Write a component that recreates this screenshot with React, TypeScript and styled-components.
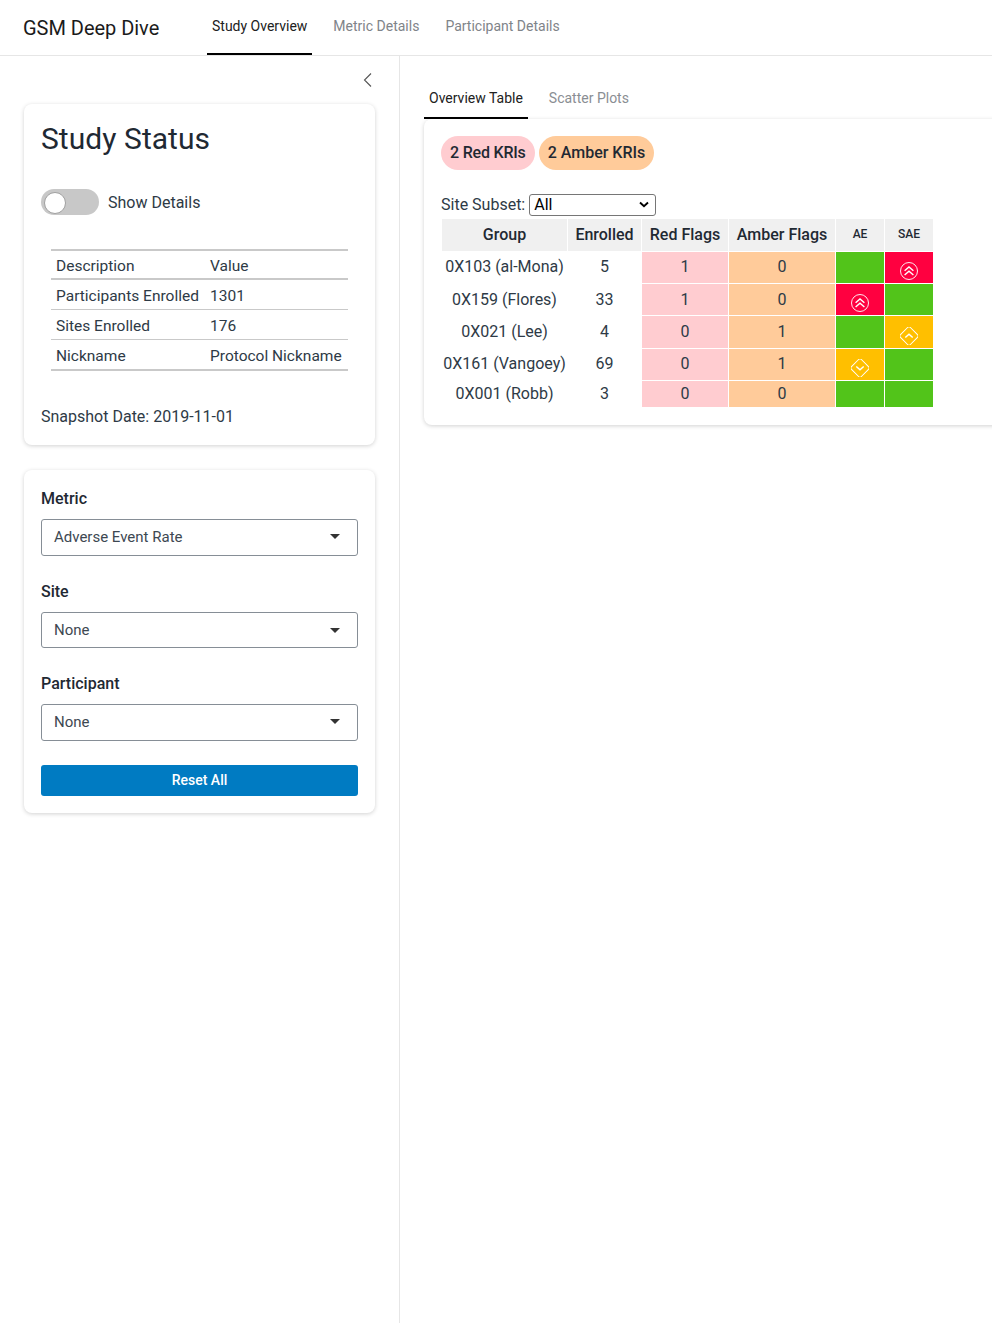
import React from "react";
import styled, {createGlobalStyle} from "styled-components";

const GlobalStyle = createGlobalStyle`
    html, body {
        margin: 0;
        padding: 0;
        background: #ffffff;
    }
    body {
        font-family: Roboto, "Liberation Sans", sans-serif;
        color: #212b36;
    }
`;

const Page = styled.div`
    width: 992px;
    height: 1323px;
    display: flex;
    flex-direction: column;
    overflow: hidden;
`;

const Header = styled.header`
    height: 55px;
    flex: none;
    display: flex;
    border-bottom: 1px solid #e6e6e6;
`;

const Brand = styled.div`
    width: 207px;
    padding: 16px 0 0 23px;
    box-sizing: border-box;
    font-size: 20px;
    line-height: 24px;
    letter-spacing: -0.03px;
    color: #1b1b1b;
`;

const NavTabs = styled.nav`
    display: flex;
`;

const NavTab = styled.div<{$active?: boolean}>`
    height: 55px;
    box-sizing: border-box;
    padding: 18px 5px 0;
    margin-right: 16px;
    font-size: 14px;
    line-height: 17px;
    color: ${(props) => (props.$active ? "#212121" : "#7f8489")};
    border-bottom: 2px solid ${(props) => (props.$active ? "#000000" : "transparent")};
`;

const Body = styled.div`
    flex: 1;
    display: flex;
`;

const Sidebar = styled.aside`
    width: 400px;
    flex: none;
    box-sizing: border-box;
    border-right: 1px solid #e6e6e6;
    padding: 0 23px 0 24px;
`;

const CollapseRow = styled.div`
    height: 48px;
    display: flex;
    justify-content: flex-end;
    align-items: flex-start;
    padding-top: 16px;
    box-sizing: border-box;
    svg {
        margin-right: 3px;
    }
`;

const Card = styled.section`
    width: 351px;
    box-sizing: border-box;
    background: #ffffff;
    border-radius: 8px;
    box-shadow: 0 1px 4px rgba(0, 0, 0, 0.18);
    padding: 0 17px;
`;

const StatusCard = styled(Card)`
    height: 341px;
    margin-bottom: 25px;
`;

const ControlsCard = styled(Card)`
    height: 343px;
`;

const Title = styled.h1`
    margin: 0;
    padding-top: 17px;
    font-size: 30px;
    line-height: 36px;
    font-weight: 400;
    letter-spacing: 0.05px;
    color: #1f2933;
`;

const SwitchRow = styled.div`
    display: flex;
    align-items: center;
    margin-top: 32px;
    font-size: 16px;
    color: #2e3a46;
`;

const SwitchTrack = styled.div`
    width: 58px;
    height: 26px;
    border-radius: 13px;
    background: #c8c8c8;
    margin-right: 9px;
    position: relative;
`;

const SwitchKnob = styled.div`
    position: absolute;
    top: 3px;
    left: 3px;
    width: 20px;
    height: 20px;
    border-radius: 50%;
    background: #ffffff;
    border: 1px solid #a0a0a0;
`;

const InfoTable = styled.table`
    border-collapse: collapse;
    margin: 34px 0 0 10px;
    width: 297px;
    font-size: 15.5px;
    color: #2e3a46;
    border-top: 2px solid #c9c9c9;
    border-bottom: 2px solid #c9c9c9;
    td {
        padding: 4px 5px 0;
        height: 30px;
        box-sizing: border-box;
        border-bottom: 1px solid #c9c9c9;
        white-space: nowrap;
    }
    td:first-child {
        width: 154px;
    }
    tr:first-child td {
        height: 29px;
        padding-top: 2px;
        border-bottom-width: 2px;
    }
    tr:last-child td {
        height: 31px;
        border-bottom: 0;
    }
`;

const Snapshot = styled.div`
    margin-top: 36px;
    font-size: 16px;
    line-height: 20px;
    color: #2e3a46;
`;

const FieldLabel = styled.div`
    font-size: 16px;
    line-height: 19px;
    font-weight: 500;
    color: #1f2933;
    margin-bottom: 11px;
`;

const Field = styled.div<{$gap: number}>`
    padding-top: ${(props) => props.$gap}px;
`;

const SelectBox = styled.div<{$height: number; $lift: number}>`
    height: ${(props) => props.$height}px;
    box-sizing: border-box;
    border: 1px solid #868e96;
    border-radius: 3px;
    display: flex;
    align-items: center;
    justify-content: space-between;
    padding: 0 17px ${(props) => props.$lift}px 12px;
    font-size: 15px;
    color: #3d4852;
`;

const Caret = styled.span`
    width: 0;
    height: 0;
    border-left: 5.5px solid transparent;
    border-right: 5.5px solid transparent;
    border-top: 5px solid #333333;
`;

const ResetButton = styled.button`
    display: block;
    width: 100%;
    height: 31px;
    margin-top: 24px;
    padding: 0 0 1px;
    border: 0;
    border-radius: 3px;
    background: #007bc2;
    color: #ffffff;
    font-family: inherit;
    font-size: 14px;
    font-weight: 500;
`;

const Main = styled.main`
    flex: 1;
    min-width: 0;
    padding: 24px 0 0 24px;
`;

const SubTabs = styled.div`
    display: flex;
    height: 39px;
    box-sizing: border-box;
`;

const SubTab = styled.div<{$active?: boolean}>`
    height: 39px;
    box-sizing: border-box;
    padding: 10px 5px 0;
    margin-right: 16px;
    font-size: 14px;
    line-height: 17px;
    color: ${(props) => (props.$active ? "#212121" : "#8a8e93")};
    border-bottom: 2px solid ${(props) => (props.$active ? "#000000" : "transparent")};
`;

const ResultCard = styled.section`
    width: 600px;
    height: 306px;
    box-sizing: border-box;
    border-radius: 8px 0 0 8px;
    box-shadow: 0 1px 4px rgba(0, 0, 0, 0.18);
    padding: 17px 0 0 17px;
`;

const Badges = styled.div`
    display: flex;
    gap: 4px;
`;

const Badge = styled.div<{$color: string; $tracking?: number}>`
    height: 34px;
    padding: 0 9px;
    border-radius: 17px;
    background: ${(props) => props.$color};
    font-size: 16px;
    font-weight: 500;
    line-height: 34px;
    letter-spacing: ${(props) => props.$tracking || 0}px;
    color: #1f2933;
`;

const SubsetRow = styled.div`
    margin-top: 23px;
    height: 25px;
    padding-bottom: 2px;
    box-sizing: border-box;
    display: flex;
    align-items: center;
    font-size: 16px;
    color: #2e3a46;
`;

const SubsetSelect = styled.select`
    appearance: none;
    margin-left: 4px;
    width: 127px;
    height: 22px;
    padding: 0 0 0 4px;
    font-family: inherit;
    font-size: 16px;
    color: #000000;
    background: #ffffff
        url("data:image/svg+xml,%3Csvg xmlns='http://www.w3.org/2000/svg' width='10' height='7' viewBox='0 0 10 7'%3E%3Cpath d='M1 1.5 5 5.2 9 1.5' fill='none' stroke='%23000' stroke-width='1.9'/%3E%3C/svg%3E")
        no-repeat right 6px center;
    border: 1px solid #767676;
    border-radius: 3px;
`;

const FlagTable = styled.table`
    border-collapse: separate;
    border-spacing: 1px;
    table-layout: fixed;
    width: 493px;
    font-size: 16px;
    color: #2e3a46;
    text-align: center;
    th {
        background: #f0f0f0;
        height: 32px;
        box-sizing: border-box;
        padding: 0 0 2px;
        font-weight: 500;
        color: #1f2933;
        white-space: nowrap;
    }
    td {
        box-sizing: border-box;
        white-space: nowrap;
    }
`;

const SmallHead = styled.th`
    font-size: 12px;
`;

const FlagCell = styled.td<{$color: string; $height: number; $lift: number}>`
    background: ${(props) => props.$color};
    height: ${(props) => props.$height}px;
    padding: 0 0 ${(props) => props.$lift}px;
    vertical-align: middle;
`;

const StatusCell = styled.td<{$color: string}>`
    background: ${(props) => props.$color};
    padding: 0;
    line-height: 0;
    vertical-align: bottom;
    svg {
        margin-bottom: 3px;
    }
`;

const RED = "#ffccd0";
const AMBER = "#ffcb9a";
const GOOD = "#52c41a";
const BAD = "#ff0040";
const WARN = "#ffbf00";

type Mark = "bad" | "warnUp" | "warnDown" | null;

const rows: {
    group: string;
    enrolled: number;
    red: number;
    amber: number;
    ae: Mark;
    sae: Mark;
    height: number;
    lift: number;
}[] = [
    {group: "0X103 (al-Mona)", enrolled: 5, red: 1, amber: 0, ae: null, sae: "bad", height: 31, lift: 2},
    {group: "0X159 (Flores)", enrolled: 33, red: 1, amber: 0, ae: "bad", sae: null, height: 31, lift: 0},
    {group: "0X021 (Lee)", enrolled: 4, red: 0, amber: 1, ae: null, sae: "warnUp", height: 32, lift: 2},
    {group: "0X161 (Vangoey)", enrolled: 69, red: 0, amber: 1, ae: "warnDown", sae: null, height: 31, lift: 2},
    {group: "0X001 (Robb)", enrolled: 3, red: 0, amber: 0, ae: null, sae: null, height: 26, lift: 2},
];

const MarkIcon = ({mark}: {mark: Mark}): JSX.Element | null => {
    if (mark === "bad") {
        return (
            <svg width="18" height="18" viewBox="0 0 18 18" fill="none" stroke="#ffffff" strokeWidth="0.9">
                <circle cx="9" cy="9" r="8.5" />
                <path d="M4.6 8.7 9 4.9l4.4 3.8M4.6 13 9 9.2l4.4 3.8" strokeWidth="1.4" />
            </svg>
        );
    }
    if (mark === "warnUp" || mark === "warnDown") {
        return (
            <svg width="18" height="18" viewBox="0 0 18 18" fill="none" stroke="#ffffff" strokeWidth="1">
                <rect x="2" y="2" width="14" height="14" rx="2" transform="rotate(45 9 9)" />
                <path
                    d={mark === "warnUp" ? "M5.3 10.6 9 7.2l3.7 3.4" : "M5.3 7.4 9 10.8l3.7-3.4"}
                    strokeWidth="1.4"
                />
            </svg>
        );
    }
    return null;
};

const markColor = (mark: Mark): string => {
    if (mark === "bad") return BAD;
    if (mark === null) return GOOD;
    return WARN;
};

export default function App(): JSX.Element {
    return (
        <Page>
            <GlobalStyle />
            <Header>
                <Brand>GSM Deep Dive</Brand>
                <NavTabs>
                    <NavTab $active>Study Overview</NavTab>
                    <NavTab>Metric Details</NavTab>
                    <NavTab>Participant Details</NavTab>
                </NavTabs>
            </Header>
            <Body>
                <Sidebar>
                    <CollapseRow>
                        <svg width="10" height="16" viewBox="0 0 10 16" fill="none" stroke="#555555" strokeWidth="1.1">
                            <path d="M8 1.5 1.5 8 8 14.5" />
                        </svg>
                    </CollapseRow>
                    <StatusCard>
                        <Title>Study Status</Title>
                        <SwitchRow>
                            <SwitchTrack>
                                <SwitchKnob />
                            </SwitchTrack>
                            Show Details
                        </SwitchRow>
                        <InfoTable>
                            <tbody>
                                <tr>
                                    <td>Description</td>
                                    <td>Value</td>
                                </tr>
                                <tr>
                                    <td>Participants Enrolled</td>
                                    <td>1301</td>
                                </tr>
                                <tr>
                                    <td>Sites Enrolled</td>
                                    <td>176</td>
                                </tr>
                                <tr>
                                    <td>Nickname</td>
                                    <td>Protocol Nickname</td>
                                </tr>
                            </tbody>
                        </InfoTable>
                        <Snapshot>Snapshot Date: 2019-11-01</Snapshot>
                    </StatusCard>
                    <ControlsCard>
                        <Field $gap={19}>
                            <FieldLabel>Metric</FieldLabel>
                            <SelectBox $height={37} $lift={2}>
                                Adverse Event Rate
                                <Caret />
                            </SelectBox>
                        </Field>
                        <Field $gap={26}>
                            <FieldLabel>Site</FieldLabel>
                            <SelectBox $height={36} $lift={0}>
                                None
                                <Caret />
                            </SelectBox>
                        </Field>
                        <Field $gap={26}>
                            <FieldLabel>Participant</FieldLabel>
                            <SelectBox $height={37} $lift={2}>
                                None
                                <Caret />
                            </SelectBox>
                        </Field>
                        <ResetButton>Reset All</ResetButton>
                    </ControlsCard>
                </Sidebar>
                <Main>
                    <SubTabs>
                        <SubTab $active>Overview Table</SubTab>
                        <SubTab>Scatter Plots</SubTab>
                    </SubTabs>
                    <ResultCard>
                        <Badges>
                            <Badge $color={RED} $tracking={-0.2}>2 Red KRIs</Badge>
                            <Badge $color={AMBER}>2 Amber KRIs</Badge>
                        </Badges>
                        <SubsetRow>
                            Site Subset:
                            <SubsetSelect defaultValue="All">
                                <option>All</option>
                            </SubsetSelect>
                        </SubsetRow>
                        <FlagTable>
                            <colgroup>
                                <col width="125" />
                                <col width="73" />
                                <col width="86" />
                                <col width="106" />
                                <col width="48" />
                                <col width="48" />
                            </colgroup>
                            <thead>
                                <tr>
                                    <th>Group</th>
                                    <th>Enrolled</th>
                                    <th>Red Flags</th>
                                    <th>Amber Flags</th>
                                    <SmallHead>AE</SmallHead>
                                    <SmallHead>SAE</SmallHead>
                                </tr>
                            </thead>
                            <tbody>
                                {rows.map((row) => (
                                    <tr key={row.group}>
                                        <FlagCell $color="transparent" $height={row.height} $lift={row.lift}>
                                            {row.group}
                                        </FlagCell>
                                        <FlagCell $color="transparent" $height={row.height} $lift={row.lift}>
                                            {row.enrolled}
                                        </FlagCell>
                                        <FlagCell $color={RED} $height={row.height} $lift={row.lift}>
                                            {row.red}
                                        </FlagCell>
                                        <FlagCell $color={AMBER} $height={row.height} $lift={row.lift}>
                                            {row.amber}
                                        </FlagCell>
                                        <StatusCell $color={markColor(row.ae)}>
                                            <MarkIcon mark={row.ae} />
                                        </StatusCell>
                                        <StatusCell $color={markColor(row.sae)}>
                                            <MarkIcon mark={row.sae} />
                                        </StatusCell>
                                    </tr>
                                ))}
                            </tbody>
                        </FlagTable>
                    </ResultCard>
                </Main>
            </Body>
        </Page>
    );
}
